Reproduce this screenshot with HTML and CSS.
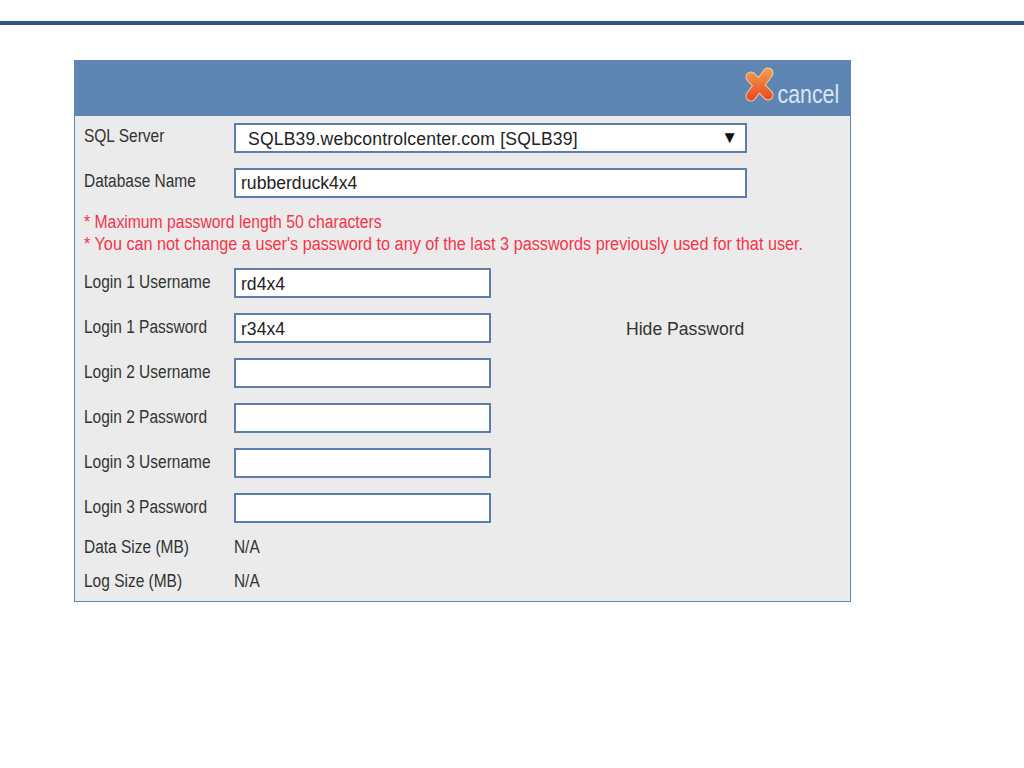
FILE: index.html
```html
<!DOCTYPE html>
<html lang="en">
<head>
  <meta charset="UTF-8">
  <title>Edit Database</title>
  <link rel="stylesheet" href="styles.css">
</head>
<body>

<div class="top-line"></div>

<section class="panel">
  <div class="panel-head">
    <a class="cancel" href="#">
      <svg class="cancel-icon" width="30" height="38" viewBox="0 0 30 38" aria-hidden="true">
        <defs>
          <linearGradient id="xFill" gradientUnits="userSpaceOnUse" x1="0" y1="2" x2="0" y2="36">
            <stop offset="0" stop-color="#f5a050"/>
            <stop offset="1" stop-color="#e8431a"/>
          </linearGradient>
        </defs>
        <path d="M7 11 L24 29 M24 7 L7 30" fill="none" stroke="#f6c9a0" stroke-width="11" stroke-linecap="round"/>
        <path d="M7 11 L24 29 M24 7 L7 30" fill="none" stroke="url(#xFill)" stroke-width="9" stroke-linecap="round"/>
      </svg>
      <span>cancel</span>
    </a>
  </div>

  <div class="panel-body">
    <div class="row top">
      <label><span>SQL Server</span></label>
      <div class="field wide select">
        <span>SQLB39.webcontrolcenter.com [SQLB39]</span>
        <i class="arrow">&#9660;</i>
      </div>
    </div>
    <div class="row top">
      <label><span>Database Name</span></label>
      <div class="field wide">rubberduck4x4</div>
    </div>

    <div class="notes">
      <div class="note-short">* Maximum password length 50 characters</div>
      <div class="note-long">* You can not change a user's password to any of the last 3 passwords previously used for that user.</div>
    </div>

    <div class="row">
      <label><span>Login 1 Username</span></label>
      <div class="field">rd4x4</div>
    </div>
    <div class="row">
      <label><span>Login 1 Password</span></label>
      <div class="field">r34x4</div>
      <a class="hide-link" href="#">Hide Password</a>
    </div>
    <div class="row">
      <label><span>Login 2 Username</span></label>
      <div class="field"></div>
    </div>
    <div class="row">
      <label><span>Login 2 Password</span></label>
      <div class="field"></div>
    </div>
    <div class="row">
      <label><span>Login 3 Username</span></label>
      <div class="field"></div>
    </div>
    <div class="row">
      <label><span>Login 3 Password</span></label>
      <div class="field"></div>
    </div>

    <div class="info first">
      <label><span>Data Size (MB)</span></label>
      <b>N/A</b>
    </div>
    <div class="info">
      <label><span>Log Size (MB)</span></label>
      <b>N/A</b>
    </div>
  </div>
</section>

</body>
</html>
```

FILE: styles.css
```css
* {
  margin: 0;
  padding: 0;
  box-sizing: border-box;
}

body {
  background: #fff;
  color: #333;
  font-family: "Liberation Sans", Arial, sans-serif;
  font-size: 17.6px;
}

.top-line {
  height: 4px;
  margin-top: 21px;
  background: #2f5686;
}

/* Panel */
.panel {
  width: 777px;
  margin: 35px 0 0 74px;
  background: #ebebeb;
  border: 1px solid #5f86b3;
  border-top: 0;
}

.panel-head {
  height: 56px;
  background: #5f86b3;
  display: flex;
  justify-content: flex-end;
  align-items: flex-end;
  padding: 0 11px 7px 0;
}

.cancel {
  display: flex;
  align-items: flex-end;
  color: #d8e6f2;
  text-decoration: none;
  font-size: 26px;
  line-height: 30px;
}

.cancel-icon {
  margin: 0 -2px 5px 0;
}

.cancel span {
  display: block;
  transform: scaleX(0.82);
  transform-origin: right center;
  margin-left: -8px;
}

.panel-body {
  padding: 7px 0 0 9px;
}

/* Rows */
.row {
  display: flex;
  align-items: center;
  height: 30px;
  margin-bottom: 15px;
}

.row label,
.info label {
  width: 150px;
  flex: none;
  padding-bottom: 2px;
}

/* the screenshot text is narrow and tall */
label span {
  display: block;
  white-space: nowrap;
  transform: scaleX(0.88);
  transform-origin: left center;
}

.row.top label {
  padding-bottom: 4px;
}

.field {
  width: 257px;
  height: 30px;
  background: #fff;
  border: 2px solid #5b7fa9;
  padding-left: 5px;
  line-height: 29px;
  color: #222;
}

.field.wide {
  width: 513px;
}

.row.top .field {
  line-height: 26px;
}

.select {
  display: flex;
  justify-content: space-between;
  padding: 0 7px 0 12px;
}

.select span {
  padding-top: 1px;
  letter-spacing: 0.17px;
}

.arrow {
  font-style: normal;
  font-size: 17px;
  color: #111;
  padding-bottom: 4px;
}

.notes {
  color: #f4344a;
  line-height: 22px;
  margin: -2px 0 13px;
  white-space: nowrap;
}

.note-short,
.note-long {
  transform-origin: left center;
}

.note-short {
  transform: scaleX(0.895);
}

.note-long {
  transform: scaleX(0.922);
}

.hide-link {
  margin-left: 135px;
  padding-top: 2px;
  color: #333;
  text-decoration: none;
}

.info {
  display: flex;
  height: 34px;
  align-items: center;
}

.info.first {
  margin-top: -5px;
}

.info b {
  font-weight: normal;
  padding-bottom: 6px;
  transform: scaleX(0.875);
  transform-origin: left center;
}

.info label {
  padding-bottom: 6px;
}
```
